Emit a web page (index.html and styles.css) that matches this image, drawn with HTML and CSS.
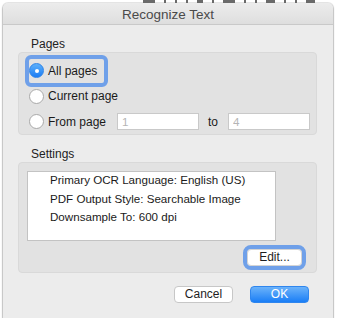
FILE: index.html
```html
<!DOCTYPE html>
<html lang="en">
<head>
    <meta charset="UTF-8">
    <title>Recognize Text</title>
    <link rel="stylesheet" href="styles.css">
</head>
<body>

<div class="backdrop">
    <i class="w4"></i><i></i><i></i><i></i><i class="w2"></i><i></i><i class="w4"></i><i></i><i></i><i class="w3"></i><i></i><i></i><i class="w3"></i>
</div>

<div class="dialog">
    <div class="titlebar">Recognize Text</div>

    <div class="content">
        <div class="group-label">Pages</div>
        <div class="group pages">
            <div class="option">
                <span class="focus">
                    <span class="radio checked"></span>
                    <span class="option-text">All pages</span>
                </span>
            </div>
            <div class="option">
                <span class="radio"></span>
                <span class="option-text">Current page</span>
            </div>
            <div class="option">
                <span class="radio"></span>
                <span class="option-text">From page</span>
                <input class="page-field first" type="text" placeholder="1">
                <span class="to">to</span>
                <input class="page-field" type="text" placeholder="4">
            </div>
        </div>

        <div class="group-label settings-label">Settings</div>
        <div class="group settings">
            <div class="settings-list">
                <div>Primary OCR Language: English (US)</div>
                <div>PDF Output Style: Searchable Image</div>
                <div>Downsample To: 600 dpi</div>
            </div>
            <div class="edit-row">
                <span class="focus-btn"><button class="btn">Edit...</button></span>
            </div>
        </div>

        <div class="actions">
            <button class="btn">Cancel</button>
            <button class="btn primary">OK</button>
        </div>
    </div>
</div>

</body>
</html>
```

FILE: styles.css
```css
body {
    margin: 0;
    background: #fff;
    font-family: "Liberation Sans", Arial, sans-serif;
    font-size: 11.6px;
    color: #1a1a1a;
}
/* bits of the document behind the sheet */
.backdrop {
    height: 3px;
    overflow: hidden;
    padding-left: 143px;
    display: flex;
    gap: 9px;
}
.backdrop i {
    width: 2px;
    height: 3px;
    background: #6a6a6a;
}
.backdrop i.w2 { width: 6px; }
.backdrop i.w3 { width: 9px; }
.backdrop i.w4 { width: 12px; }
.dialog {
    width: 330px;
    height: 315px;
    margin-left: 3px;
    background: #ececec;
    border-radius: 5px 5px 0 0;
    box-shadow: 0 0 0 1px rgba(0, 0, 0, 0.08), 0 1px 2px rgba(0, 0, 0, 0.55);
}
.titlebar {
    height: 21px;
    line-height: 23px;
    text-align: center;
    font-size: 13.5px;
    color: #4a4a4a;
    background: linear-gradient(#ececec, #dedede);
    border-bottom: 1px solid #c9c9c9;
    border-radius: 5px 5px 0 0;
}
.content {
    padding: 12px 16px 0 15px;
}
.group-label {
    font-size: 12px;
    line-height: 15px;
    padding-left: 13px;
    color: #222;
}
.settings-label {
    margin-top: 12px;
}
.group {
    background: #e2e2e2;
    border: 1px solid #d9d9d9;
    border-radius: 4px;
}
.pages {
    padding: 5px 0 0 10px;
    box-sizing: border-box;
    height: 83px;
}
.option {
    display: flex;
    align-items: center;
    height: 25.5px;
}
.focus {
    display: flex;
    align-items: center;
    height: 24px;
    padding-right: 7px;
    outline: 4px solid #6fa0e9;
    border-radius: 2px;
}
.radio {
    width: 13px;
    height: 13px;
    border-radius: 50%;
    background: #fff;
    border: 1px solid #a9a9a9;
    box-sizing: content-box;
    flex: none;
    position: relative;
}
.radio.checked {
    background: linear-gradient(#5db0fa, #1b7df5);
    border-color: #2e84e8;
}
.radio.checked::after {
    content: "";
    position: absolute;
    left: 4.5px;
    top: 4.5px;
    width: 4px;
    height: 4px;
    border-radius: 50%;
    background: #fff;
}
.option-text {
    margin-left: 4px;
    font-size: 12px;
}
.page-field {
    width: 82px;
    height: 17px;
    box-sizing: border-box;
    margin-left: 11px;
    border: 1px solid #c9c9c9;
    background: #fff;
    padding: 0 4px;
    font-family: inherit;
    font-size: 11.6px;
}
.page-field::placeholder {
    color: #b5b5b5;
}
.to {
    margin: 0 10px 0 9px;
    font-size: 12px;
}
.page-field:last-child {
    margin-left: 0;
}
.settings {
    height: 111px;
    padding: 8px 0 0 8px;
    box-sizing: border-box;
}
.settings-list {
    width: 249px;
    height: 70px;
    box-sizing: border-box;
    background: #fff;
    border: 1px solid #c3c3c3;
    padding: 0 0 0 22px;
    line-height: 18.5px;
}
.settings-list div:first-child {
    margin-top: -1px;
}
.edit-row {
    display: flex;
    justify-content: flex-end;
    padding-right: 14px;
    margin-top: 8px;
}
.focus-btn {
    display: flex;
    outline: 4px solid #6fa0e9;
    border-radius: 4px;
}
.btn {
    height: 17px;
    width: 59px;
    padding: 0;
    font-family: inherit;
    font-size: 12px;
    color: #1e1e1e;
    background: #fff;
    border: 1px solid #c7c7c7;
    border-radius: 4px;
    line-height: 15px;
}
.focus-btn .btn {
    width: 55px;
    border-color: #d4d4d4;
}
.actions {
    display: flex;
    justify-content: flex-end;
    gap: 17px;
    margin-top: 13px;
    padding-right: 8px;
}
.btn.primary {
    color: #fff;
    background: linear-gradient(#6cb3fa, #1a7ef6);
    border-color: #2f86ee;
}
```
